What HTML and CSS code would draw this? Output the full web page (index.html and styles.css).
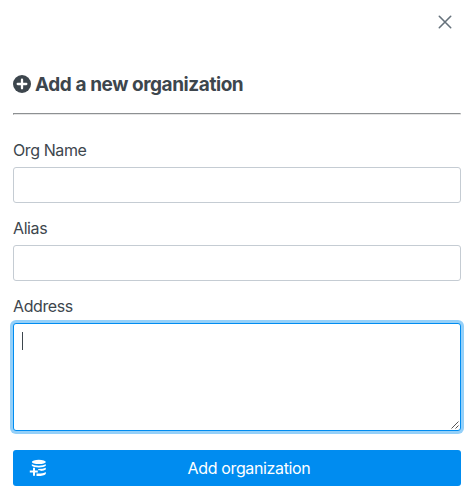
FILE: index.html
```html
<!DOCTYPE html>
<html lang="en">
<head>
<meta charset="utf-8">
<title>Add a new organization</title>
<link rel="stylesheet" href="styles.css">
</head>
<body>
<form class="panel">
  <header class="panel-top">
    <button type="button" class="close" aria-label="Close">
      <svg width="14" height="14" viewBox="0 0 14 14"><path d="M1.3 1.3l11.4 11.4M12.7 1.3L1.3 12.7"/></svg>
    </button>
  </header>
  <h1 class="title">
    <svg class="title-icon" width="18" height="18" viewBox="0 0 18 18"><circle cx="9" cy="9" r="9" fill="currentColor"/><path d="M9 4.7v8.6M4.7 9h8.6" stroke="#fff" stroke-width="2.3" stroke-linecap="round"/></svg>
    <span class="title-text">Add a new organization</span>
  </h1>
  <hr class="rule">
  <label class="label" for="org">Org Name</label>
  <input class="input" id="org" type="text">
  <label class="label" for="alias">Alias</label>
  <input class="input" id="alias" type="text">
  <label class="label" for="address">Address</label>
  <div class="area-wrap">
    <textarea class="area" id="address"></textarea>
    <span class="caret"></span>
    <svg class="grip" width="8" height="8" viewBox="0 0 8 8"><path d="M.5 7.5l7-7M4.5 7.5l3-3"/></svg>
  </div>
  <button type="button" class="submit">
    <svg class="submit-icon" width="18" height="18" viewBox="0 0 18 18">
      <g fill="#fff"><ellipse cx="9.8" cy="2.9" rx="7" ry="2.1"/>
      <path d="M2.8 5.3q2.3 1.4 7 1.4t7-1.4v1.5q-2 1.6-7 1.6t-7-1.6z"/>
      <path d="M9.2 9.9q5 0 7.6-1.2v1.8q-1.5 1.3-5.3 1.4v-.7H9.2z"/>
      <path d="M7.5 14.6q6.5.2 9.3-1.6v2.1q-2.2 2.2-9.3 2z"/></g>
      <path d="M5 8.8v8M.8 12.6h8" stroke="#fff" stroke-width="2"/>
    </svg>
    <span class="submit-text">Add organization</span>
  </button>
</form>
</body>
</html>
```
FILE: styles.css
```css
* { box-sizing: border-box; }
body {
  margin: 0;
  background: #fff;
  color: #3d464d;
  font: 16px/24px Inter, "Liberation Sans", sans-serif;
}
.panel { display: flex; flex-direction: column; padding: 0 12px 0 13px; }
.panel-top { display: flex; justify-content: flex-end; height: 71px; padding: 15px 9px 0 0; }
.close { width: 14px; height: 14px; padding: 0; border: 0; background: none; }
.close svg { display: block; fill: none; stroke: #65717b; stroke-width: 1.6; stroke-linecap: round; }
.title {
  display: flex;
  align-items: center;
  gap: 4px;
  height: 26px;
  margin: 0;
  font-size: 19px;
  line-height: 26px;
  font-weight: 700;
  white-space: nowrap;
}
.title-icon { flex: none; }
.title-text { padding-top: 2px; letter-spacing: -0.43px; }
.rule { width: 100%; height: 2px; margin: 16px 0 23px; border: 1px solid; border-color: #8d9092 #e5e5e5 #e5e5e5 #8d9092; }
.label { height: 29px; line-height: 24px; letter-spacing: -0.4px; white-space: nowrap; }
.input {
  width: 100%;
  height: 36px;
  margin: 0 0 13px;
  padding: 6px 8px;
  border: 1px solid #c5ccd3;
  border-radius: 3px;
  background: #fff;
  outline: 0;
}
.area-wrap { position: relative; height: 108px; margin-bottom: 19px; }
.area {
  display: block;
  width: 100%;
  height: 108px;
  padding: 8px;
  border: 1px solid #008cf0;
  border-radius: 3px;
  box-shadow: 0 0 0 3px #94d0f9;
  resize: none;
  outline: 0;
}
.caret { position: absolute; left: 9px; top: 9px; width: 1px; height: 18px; background: #3d464d; }
.grip { position: absolute; right: 2px; bottom: 2px; fill: none; stroke: #555; stroke-width: 1; }
.submit {
  display: flex;
  align-items: center;
  width: 100%;
  height: 36px;
  padding: 0 17px 0 16px;
  border: 0;
  border-radius: 3px;
  background: #008cf0;
  color: #fff;
  font: inherit;
}
.submit-icon { flex: none; }
.submit-text { flex: 1; padding-left: 7px; text-align: center; letter-spacing: -0.36px; white-space: nowrap; }
```
